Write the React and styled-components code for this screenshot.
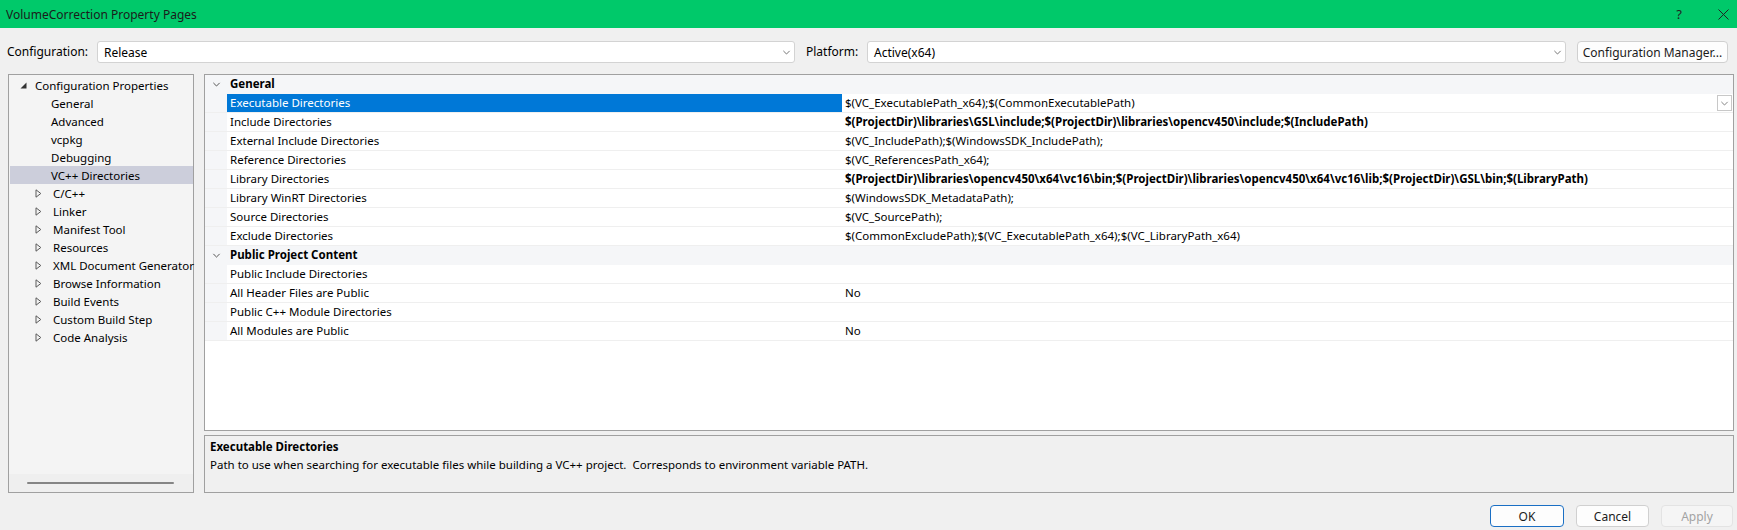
import React from 'react';
import styled, { createGlobalStyle } from 'styled-components';

const GlobalStyle = createGlobalStyle`
  html, body {
    margin: 0;
    padding: 0;
    background: #f0f0f0;
  }
  body {
    font-family: 'Segoe UI', 'Noto Sans', 'Liberation Sans', sans-serif;
    font-size: 11.5px;
    color: #000;
  }
`;

const Window = styled.div`
  width: 1737px;
  height: 530px;
  display: flex;
  flex-direction: column;
  overflow: hidden;
  background: #f0f0f0;
`;

const TitleBar = styled.div`
  height: 28px;
  flex: none;
  background: #00c96a;
  display: flex;
  align-items: center;
  padding-left: 6px;
  color: #1b1b1b;
  font-size: 12px;
`;

const TitleText = styled.div`
  flex: 1;
`;

const TitleButton = styled.div`
  width: ${(p) => p.$w}px;
  margin-right: ${(p) => p.$mr || 0}px;
  height: 28px;
  display: flex;
  align-items: center;
  justify-content: center;
  color: #222;
  font-size: 13px;
`;

const ConfigRow = styled.div`
  height: 46px;
  flex: none;
  display: flex;
  align-items: flex-start;
  padding: 13px 9px 0 7px;
  box-sizing: border-box;
`;

const Label = styled.div`
  width: ${(p) => p.$w}px;
  height: 22px;
  line-height: 22px;
  flex: none;
  font-size: 12px;
`;

const Select = styled.div`
  width: ${(p) => p.$w}px;
  height: 22px;
  box-sizing: border-box;
  flex: none;
  background: #fff;
  border: 1px solid #d3d3d3;
  border-radius: 3px;
  display: flex;
  align-items: center;
  padding: 0 3px 0 6px;
  margin-right: ${(p) => p.$mr || 0}px;
  font-size: 12px;
`;

const SelectText = styled.div`
  flex: 1;
`;

const PushButton = styled.div`
  height: 22px;
  box-sizing: border-box;
  flex: none;
  width: ${(p) => p.$w}px;
  display: flex;
  align-items: center;
  justify-content: center;
  border-radius: 4px;
  font-size: 12px;
  background: ${(p) => (p.$disabled ? '#f5f5f5' : '#fdfdfd')};
  border: 1px solid ${(p) => (p.$default ? '#1a6fc4' : p.$disabled ? '#e3e3e3' : '#d0d0d0')};
  color: ${(p) => (p.$disabled ? '#a3a3a3' : '#1b1b1b')};
`;

const Body = styled.div`
  height: 419px;
  flex: none;
  display: flex;
  padding-left: 8px;
`;

const TreePanel = styled.div`
  width: 186px;
  height: 419px;
  box-sizing: border-box;
  border: 1px solid #a0a0a0;
  background: #f4f4f4;
  display: flex;
  flex-direction: column;
  margin-right: 10px;
`;

const TreeList = styled.div`
  flex: 1;
  padding-top: 1px;
  padding-left: 1px;
`;

const TreeRow = styled.div`
  height: 18px;
  display: flex;
  align-items: center;
  padding-left: ${(p) => p.$indent}px;
  background: ${(p) => (p.$selected ? '#cccedb' : 'transparent')};
  white-space: nowrap;
`;

const TreeArrow = styled.span`
  width: ${(p) => p.$w}px;
  flex: none;
  display: inline-flex;
  align-items: center;
`;

const HScroll = styled.div`
  height: 18px;
  flex: none;
  background: #efefef;
  display: flex;
  align-items: center;
  padding-left: 18px;
`;

const HThumb = styled.div`
  width: 147px;
  height: 2px;
  background: #858585;
  border-radius: 1px;
`;

const RightColumn = styled.div`
  width: 1530px;
  display: flex;
  flex-direction: column;
  gap: 4px;
`;

const Grid = styled.div`
  height: 357px;
  box-sizing: border-box;
  border: 1px solid #a0a0a0;
  background: #fff;
`;

const GridRow = styled.div`
  height: 19px;
  box-sizing: border-box;
  display: flex;
  background: ${(p) => (p.$header ? '#f5f6f8' : '#fff')};
  border-bottom: 1px solid ${(p) => (p.$header ? '#f5f6f8' : '#efefef')};
`;

const Gutter = styled.div`
  width: 22px;
  flex: none;
  background: #f5f6f8;
  display: flex;
  align-items: center;
  padding-left: 7px;
  box-sizing: border-box;
`;

const HeaderText = styled.div`
  font-weight: bold;
  line-height: 18px;
  padding-left: 3px;
`;

const NameCell = styled.div`
  width: 615px;
  flex: none;
  line-height: 18px;
  padding-left: 3px;
  box-sizing: border-box;
  background: ${(p) => (p.$selected ? '#0078d7' : 'transparent')};
  color: ${(p) => (p.$selected ? '#fff' : '#000')};
  white-space: nowrap;
`;

const ValueCell = styled.div`
  flex: 1;
  display: flex;
  align-items: center;
  padding-left: 3px;
  font-weight: ${(p) => (p.$bold ? 'bold' : 'normal')};
  white-space: nowrap;
  overflow: hidden;
`;

const ValueText = styled.div`
  flex: 1;
  line-height: 18px;
`;

const CellDrop = styled.div`
  width: 15px;
  height: 16px;
  box-sizing: border-box;
  border: 1px solid #c8c8c8;
  background: #fff;
  display: flex;
  align-items: center;
  justify-content: center;
  margin-right: 1px;
`;

const Description = styled.div`
  height: 58px;
  box-sizing: border-box;
  border: 1px solid #a0a0a0;
  background: #f0f0f0;
  padding: 2px 5px;
`;

const DescTitle = styled.div`
  font-weight: bold;
  line-height: 18px;
`;

const DescText = styled.div`
  line-height: 18px;
`;

const Footer = styled.div`
  flex: 1;
  display: flex;
  justify-content: flex-end;
  align-items: flex-start;
  gap: 12px;
  padding: 12px 4px 0 0;
`;

const Chevron = ({ size = 9, color = '#666' }) => (
  <svg width={size} height={size} viewBox="0 0 10 10">
    <path d="M1.5 3.2 L5 6.7 L8.5 3.2" fill="none" stroke={color} strokeWidth="1" />
  </svg>
);

const ExpandedArrow = () => (
  <svg width="7" height="7" viewBox="0 0 7 7">
    <path d="M6.5 0.5 L6.5 6.5 L0.5 6.5 Z" fill="#333" />
  </svg>
);

const CollapsedArrow = () => (
  <svg width="7" height="9" viewBox="0 0 7 9">
    <path d="M1 0.8 L5.8 4.5 L1 8.2 Z" fill="none" stroke="#5a5a5a" strokeWidth="1" />
  </svg>
);

const tree = [
  { label: 'Configuration Properties', level: 0, expanded: true },
  { label: 'General', level: 1 },
  { label: 'Advanced', level: 1 },
  { label: 'vcpkg', level: 1 },
  { label: 'Debugging', level: 1 },
  { label: 'VC++ Directories', level: 1, selected: true },
  { label: 'C/C++', level: 1, collapsed: true },
  { label: 'Linker', level: 1, collapsed: true },
  { label: 'Manifest Tool', level: 1, collapsed: true },
  { label: 'Resources', level: 1, collapsed: true },
  { label: 'XML Document Generator', level: 1, collapsed: true },
  { label: 'Browse Information', level: 1, collapsed: true },
  { label: 'Build Events', level: 1, collapsed: true },
  { label: 'Custom Build Step', level: 1, collapsed: true },
  { label: 'Code Analysis', level: 1, collapsed: true },
];

const sections = [
  {
    title: 'General',
    rows: [
      { name: 'Executable Directories', value: '$(VC_ExecutablePath_x64);$(CommonExecutablePath)', selected: true },
      { name: 'Include Directories', value: '$(ProjectDir)\\libraries\\GSL\\include;$(ProjectDir)\\libraries\\opencv450\\include;$(IncludePath)', bold: true },
      { name: 'External Include Directories', value: '$(VC_IncludePath);$(WindowsSDK_IncludePath);' },
      { name: 'Reference Directories', value: '$(VC_ReferencesPath_x64);' },
      { name: 'Library Directories', value: '$(ProjectDir)\\libraries\\opencv450\\x64\\vc16\\bin;$(ProjectDir)\\libraries\\opencv450\\x64\\vc16\\lib;$(ProjectDir)\\GSL\\bin;$(LibraryPath)', bold: true },
      { name: 'Library WinRT Directories', value: '$(WindowsSDK_MetadataPath);' },
      { name: 'Source Directories', value: '$(VC_SourcePath);' },
      { name: 'Exclude Directories', value: '$(CommonExcludePath);$(VC_ExecutablePath_x64);$(VC_LibraryPath_x64)' },
    ],
  },
  {
    title: 'Public Project Content',
    rows: [
      { name: 'Public Include Directories', value: '' },
      { name: 'All Header Files are Public', value: 'No' },
      { name: 'Public C++ Module Directories', value: '' },
      { name: 'All Modules are Public', value: 'No' },
    ],
  },
];

export default function App() {
  return (
    <Window>
      <GlobalStyle />
      <TitleBar>
        <TitleText>VolumeCorrection Property Pages</TitleText>
        <TitleButton $w={30} $mr={15}>?</TitleButton>
        <TitleButton $w={28}>
          <svg width="11" height="11" viewBox="0 0 11 11">
            <path d="M0.5 0.5 L10.5 10.5 M10.5 0.5 L0.5 10.5" stroke="#222" strokeWidth="1" />
          </svg>
        </TitleButton>
      </TitleBar>

      <ConfigRow>
        <Label $w={90}>Configuration:</Label>
        <Select $w={698} $mr={11}>
          <SelectText>Release</SelectText>
          <Chevron />
        </Select>
        <Label $w={61}>Platform:</Label>
        <Select $w={699} $mr={11}>
          <SelectText>Active(x64)</SelectText>
          <Chevron />
        </Select>
        <PushButton $w={151}>Configuration Manager...</PushButton>
      </ConfigRow>

      <Body>
        <TreePanel>
          <TreeList>
            {tree.map((t) => (
              <TreeRow key={t.label} $indent={t.level === 0 ? 10 : t.collapsed ? 25 : 41} $selected={t.selected}>
                {t.expanded && (
                  <TreeArrow $w={15}>
                    <ExpandedArrow />
                  </TreeArrow>
                )}
                {t.collapsed && (
                  <TreeArrow $w={18}>
                    <CollapsedArrow />
                  </TreeArrow>
                )}
                {t.label}
              </TreeRow>
            ))}
          </TreeList>
          <HScroll>
            <HThumb />
          </HScroll>
        </TreePanel>

        <RightColumn>
          <Grid>
            {sections.map((s) => (
              <React.Fragment key={s.title}>
                <GridRow $header>
                  <Gutter>
                    <Chevron size={9} color="#444" />
                  </Gutter>
                  <HeaderText>{s.title}</HeaderText>
                </GridRow>
                {s.rows.map((r) => (
                  <GridRow key={r.name}>
                    <Gutter />
                    <NameCell $selected={r.selected}>{r.name}</NameCell>
                    <ValueCell $bold={r.bold}>
                      <ValueText>{r.value}</ValueText>
                      {r.selected && (
                        <CellDrop>
                          <Chevron size={9} color="#777" />
                        </CellDrop>
                      )}
                    </ValueCell>
                  </GridRow>
                ))}
              </React.Fragment>
            ))}
          </Grid>
          <Description>
            <DescTitle>Executable Directories</DescTitle>
            <DescText>Path to use when searching for executable files while building a VC++ project.&nbsp; Corresponds to environment variable PATH.</DescText>
          </Description>
        </RightColumn>
      </Body>

      <Footer>
        <PushButton $w={74} $default>OK</PushButton>
        <PushButton $w={73}>Cancel</PushButton>
        <PushButton $w={72} $disabled>Apply</PushButton>
      </Footer>
    </Window>
  );
}
